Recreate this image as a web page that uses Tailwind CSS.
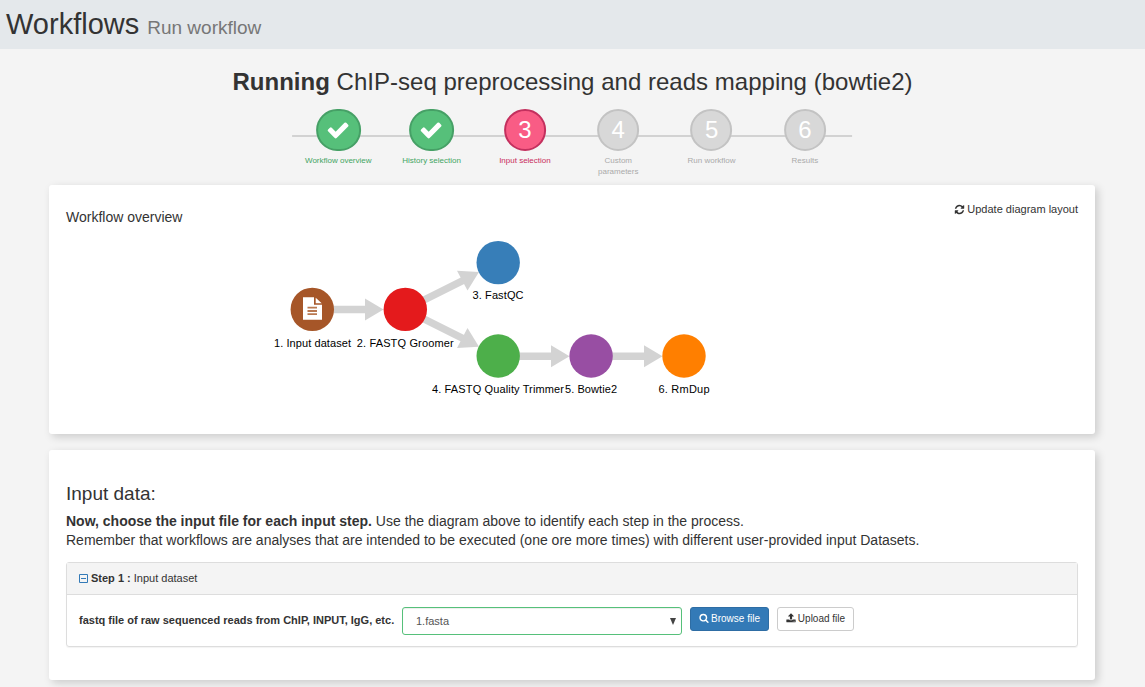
<!DOCTYPE html>
<html lang="en">
<head>
<meta charset="utf-8">
<title>Workflows - Run workflow</title>
<script src="https://cdn.jsdelivr.net/npm/@tailwindcss/browser@4"></script>
</head>
<body class="h-[687px] overflow-hidden bg-[#f4f4f4] font-['Liberation_Sans',Arial,sans-serif] text-[14px] text-[#333]">
<header class="flex h-[49px] items-baseline gap-2 bg-[#e4e8eb] pl-1.5 leading-[48px]">
  <h1 class="text-[29px]">Workflows</h1>
  <small class="text-[19px] text-[#777]">Run workflow</small>
</header>
<main class="px-[49px]">
  <h2 class="h-[60px] pt-[17px] text-center text-[24px] leading-[32px] tracking-[0.02px] whitespace-nowrap"><b>Running</b> ChIP-seq preprocessing and reads mapping (bowtie2)</h2>

  <ol class="relative mx-auto grid h-[76px] w-[560px] -translate-x-[0.9px] grid-cols-6 text-center text-[8px] leading-[11px] text-[#aaa]">
    <li class="absolute top-[26px] h-[2px] w-full bg-[#d2d2d2]"></li>
    <li class="relative flex flex-col items-center gap-1 text-[#43a563]">
      <span class="flex h-[42px] w-[45px] items-center justify-center rounded-full border-2 border-[#46a066] bg-[#56c07a]"><svg class="size-6" viewBox="0 0 1792 1792" fill="#fff"><path d="M1671 566q0 40-28 68l-724 724-136 136q-28 28-68 28t-68-28l-136-136-362-362q-28-28-28-68t28-68l136-136q28-28 68-28t68 28l294 295 656-657q28-28 68-28t68 28l136 136q28 28 28 68z"/></svg></span>
      <span>Workflow overview</span>
    </li>
    <li class="relative flex flex-col items-center gap-1 text-[#43a563]">
      <span class="flex h-[42px] w-[45px] items-center justify-center rounded-full border-2 border-[#46a066] bg-[#56c07a]"><svg class="size-6" viewBox="0 0 1792 1792" fill="#fff"><path d="M1671 566q0 40-28 68l-724 724-136 136q-28 28-68 28t-68-28l-136-136-362-362q-28-28-28-68t28-68l136-136q28-28 68-28t68 28l294 295 656-657q28-28 68-28t68 28l136 136q28 28 28 68z"/></svg></span>
      <span>History selection</span>
    </li>
    <li class="relative flex flex-col items-center gap-1 text-[#c92d5c]">
      <span class="flex size-[42px] items-center justify-center rounded-full border-2 border-[#c3305e] bg-[#f95c85] pb-[2px] text-[24px] text-white">3</span>
      <span>Input selection</span>
    </li>
    <li class="relative flex flex-col items-center gap-1">
      <span class="flex size-[42px] items-center justify-center rounded-full border-2 border-[#c3c3c3] bg-[#d8d8d8] pb-[2px] text-[24px] text-white">4</span>
      <span>Custom<br>parameters</span>
    </li>
    <li class="relative flex flex-col items-center gap-1">
      <span class="flex size-[42px] items-center justify-center rounded-full border-2 border-[#c3c3c3] bg-[#d8d8d8] pb-[2px] text-[24px] text-white">5</span>
      <span>Run workflow</span>
    </li>
    <li class="relative flex flex-col items-center gap-1">
      <span class="flex size-[42px] items-center justify-center rounded-full border-2 border-[#c3c3c3] bg-[#d8d8d8] pb-[2px] text-[24px] text-white">6</span>
      <span>Results</span>
    </li>
  </ol>

  <section class="h-[249px] w-[1046px] rounded-[3px] bg-white px-[17px] pt-4 shadow-[3px_3px_8px_rgba(0,0,0,0.17)]">
    <div class="flex h-[39px] justify-between">
      <h3 class="pt-[6px] text-[14px] leading-5">Workflow overview</h3>
      <button class="flex h-4 items-center gap-[2px] text-[11px]"><svg class="size-[11px]" viewBox="0 0 1792 1792" fill="#333"><path d="M1639 1056q0 5-1 7-64 268-268 434.5t-478 166.5q-146 0-282.5-55t-243.5-157l-129 129q-19 19-45 19t-45-19-19-45v-448q0-26 19-45t45-19h448q26 0 45 19t19 45-19 45l-137 137q71 66 161 102t187 36q134 0 250-65t186-179q11-17 53-117 8-23 30-23h192q13 0 22.5 9.5t9.5 22.5zm25-800v448q0 26-19 45t-45 19h-448q-26 0-45-19t-19-45 19-45l138-138q-148-137-349-137-134 0-250 65t-186 179q-11 17-53 117-8 23-30 23h-199q-13 0-22.5-9.5t-9.5-22.5v-7q65-268 270-434.5t480-166.5q146 0 284 55.5t245 156.5l130-129q19-19 45-19t45 19 19 45z"/></svg>Update diagram layout</button>
    </div>
    <svg class="block h-[160px] w-[1012px]" viewBox="66 240 1012 160">
      <g stroke="#d3d3d3" stroke-width="7.5">
        <path d="M312 309.5H366M405 309.5L463 280.5M405 309.5L463 338.5M498 356.2H552M591 356.2H645"/>
      </g>
      <g fill="#d3d3d3">
        <path d="M365 298.5L383.5 309.5L365 320.5Z"/>
        <path d="M457 270.7L479 272L467.5 290.5Z"/>
        <path d="M467.5 328L479 346.7L457 348Z"/>
        <path d="M551 345.2L569.5 356.2L551 367.2Z"/>
        <path d="M644 345.2L662.5 356.2L644 367.2Z"/>
      </g>
      <circle cx="312.3" cy="309.4" r="21.7" fill="#a65628"/>
      <circle cx="405.3" cy="309.4" r="21.7" fill="#e41a1c"/>
      <circle cx="498.2" cy="262.6" r="21.7" fill="#377eb8"/>
      <circle cx="498.2" cy="356" r="21.7" fill="#4daf4a"/>
      <circle cx="591.1" cy="356" r="21.7" fill="#984ea3"/>
      <circle cx="684" cy="356" r="21.7" fill="#ff7f00"/>
      <path d="M303 297.3H314V304.7H322V319.7H303ZM315.7 297.8L321.7 303.3H315.7Z" fill="#fff"/>
      <path d="M307.5 307.7H317M307.5 311H317M307.5 314.2H317" stroke="#b97850" stroke-width="1.8"/>
      <g font-family="Liberation Sans, Arial, sans-serif" font-size="11" fill="#000" text-anchor="middle">
        <text x="312.5" y="347" textLength="77">1. Input dataset</text>
        <text x="405.2" y="347" textLength="97">2. FASTQ Groomer</text>
        <text x="498" y="299" textLength="51">3. FastQC</text>
        <text x="498" y="393" textLength="132">4. FASTQ Quality Trimmer</text>
        <text x="591" y="393" textLength="52">5. Bowtie2</text>
        <text x="684" y="393" textLength="51">6. RmDup</text>
      </g>
    </svg>
  </section>

  <section class="mt-4 h-[230px] w-[1046px] rounded-[3px] bg-white px-[17px] pt-[31px] shadow-[3px_3px_8px_rgba(0,0,0,0.17)]">
    <h3 class="h-[31px] text-[19px] leading-[25px]">Input data:</h3>
    <p class="h-[50px] text-[14px] leading-[19px] whitespace-nowrap"><b>Now, choose the input file for each input step.</b> Use the diagram above to identify each step in the process.<br>Remember that workflows are analyses that are intended to be executed (one ore more times) with different user-provided input Datasets.</p>
    <div class="h-[85px] rounded-[3px] border border-[#ddd] text-[11px] shadow-[0_1px_1px_rgba(0,0,0,0.05)]">
      <div class="flex h-8 items-center gap-[3px] border-b border-[#ddd] bg-[#f4f4f4] pl-3">
        <svg class="mb-px size-[9px]" viewBox="0 0 9 9" fill="none" stroke="#337ab7"><path d="M.5 .5H8.5V8.5H.5ZM2 4.5H7"/></svg>
        <span><b>Step 1 :</b> Input dataset</span>
      </div>
      <div class="flex items-start pt-3 pl-3">
        <label class="w-[323px] leading-[27px] font-bold whitespace-nowrap">fastq file of raw sequenced reads from ChIP, INPUT, IgG, etc.</label>
        <div class="flex h-7 w-[280px] items-center justify-between rounded-[3px] border border-[#56c07a] pr-[5px] pl-[13px] text-[#555] shadow-[inset_0_1px_1px_rgba(0,0,0,0.075)]">1.fasta<svg class="h-[7px] w-[6px]" viewBox="0 0 6 7" fill="#444"><path d="M0 0H6L3 7Z"/></svg></div>
        <button class="ml-2 flex h-6 w-[79px] items-center justify-center gap-[2px] rounded-[3px] border border-[#2e6da4] bg-[#337ab7] pb-px text-[10px] text-white"><svg class="mb-px size-[10px]" viewBox="0 0 1792 1792" fill="#fff"><path d="M1216 832q0-185-131.5-316.5t-316.5-131.5-316.5 131.5-131.5 316.5 131.5 316.5 316.5 131.5 316.5-131.5 131.5-316.5zm512 832q0 52-38 90t-90 38q-54 0-90-38l-343-342q-179 124-399 124-143 0-273.5-55.5t-225-150-150-225-55.5-273.5 55.5-273.5 150-225 225-150 273.5-55.5 273.5 55.5 225 150 150 225 55.5 273.5q0 220-124 399l343 343q37 37 37 90z"/></svg>Browse file</button>
        <button class="ml-2 flex h-6 w-[77px] items-center justify-center gap-[2px] rounded-[3px] border border-[#ccc] bg-white pb-px text-[10px]"><svg class="mb-px size-[10px]" viewBox="0 0 1792 1792" fill="#333"><path d="M1344 1472q0-26-19-45t-45-19-45 19-19 45 19 45 45 19 45-19 19-45zm256 0q0-26-19-45t-45-19-45 19-19 45 19 45 45 19 45-19 19-45zm128-224v320q0 40-28 68t-68 28h-1472q-40 0-68-28t-28-68v-320q0-40 28-68t68-28h427q21 56 70.5 92t110.5 36h256q61 0 110.5-36t70.5-92h427q40 0 68 28t28 68zm-325-648q-17 40-59 40h-256v448q0 26-19 45t-45 19h-256q-26 0-45-19t-19-45v-448h-256q-42 0-59-40-17-39 14-69l448-448q18-19 45-19t45 19l448 448q31 30 14 69z"/></svg>Upload file</button>
      </div>
    </div>
  </section>
</main>
</body>
</html>
